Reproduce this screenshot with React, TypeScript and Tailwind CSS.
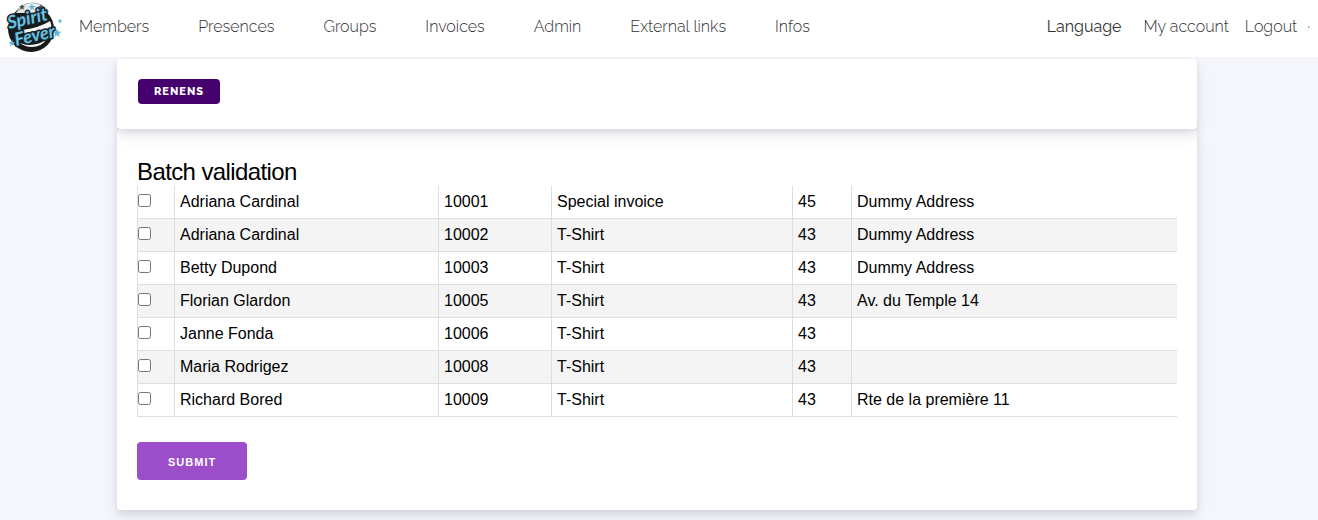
import React from "react";

const menu = ["Members", "Presences", "Groups", "Invoices", "Admin", "External links", "Infos"];

type Invoice = { name: string; number: string; item: string; amount: string; address: string };

const invoices: Invoice[] = [
  { name: "Adriana Cardinal", number: "10001", item: "Special invoice", amount: "45", address: "Dummy Address" },
  { name: "Adriana Cardinal", number: "10002", item: "T-Shirt", amount: "43", address: "Dummy Address" },
  { name: "Betty Dupond", number: "10003", item: "T-Shirt", amount: "43", address: "Dummy Address" },
  { name: "Florian Glardon", number: "10005", item: "T-Shirt", amount: "43", address: "Av. du Temple 14" },
  { name: "Janne Fonda", number: "10006", item: "T-Shirt", amount: "43", address: "" },
  { name: "Maria Rodrigez", number: "10008", item: "T-Shirt", amount: "43", address: "" },
  { name: "Richard Bored", number: "10009", item: "T-Shirt", amount: "43", address: "Rte de la première 11" },
];

const star = "M0 -5L1.4 -1.6L5 -1.4L2.2 .9L3.1 4.4L0 2.4L-3.1 4.4L-2.2 .9L-5 -1.4L-1.4 -1.6Z";

function Logo() {
  return (
    <svg viewBox="0 0 58 52" className="h-[52px] w-[58px] shrink-0" role="img" aria-label="Spirit Fever">
      <path d="M9 13Q16 2 27 2Q38 2 44 11" fill="#f1f3f4" stroke="#a9afb2" strokeWidth="1" />
      <circle cx="26" cy="28" r="23" fill="#17191a" />
      <path d="M11 12Q17 4 27 4Q37 4 42 12L30 12Z" fill="#dfe5e8" />
      <path d="M17 29Q34 27 45 20Q47 24 46 27Q33 29 18 33Z" fill="#f5f6f6" />
      <path d="M15 42Q28 47 41 39Q36 46 27 46Q20 46 15 42Z" fill="#f5f6f6" />
      <g fill="#62b7d9">
        <path d={star} transform="translate(27 6) rotate(-8) scale(.9)" stroke="#fff" strokeWidth=".6" />
        <path d={star} transform="translate(17 6) scale(.6)" fill="#3d4a50" />
        <path d={star} transform="translate(36 6) scale(.6)" fill="#3d4a50" />
        <path d={star} transform="translate(55 20) scale(.5)" />
        <path d={star} transform="translate(52 32) scale(.9)" />
        <path d={star} transform="translate(7 42) scale(.7)" />
      </g>
      <g
        fontFamily="Lato, sans-serif"
        fontStyle="italic"
        fontWeight="700"
        fill="#6ac1e2"
        stroke="#17252b"
        strokeWidth="3"
        paintOrder="stroke"
        strokeLinejoin="round"
      >
        <text x="4" y="28" fontSize="18" transform="rotate(-13 4 28)">Spirit</text>
        <text x="11" y="45" fontSize="18" transform="rotate(-13 11 45)">Fever</text>
      </g>
    </svg>
  );
}

export default function App() {
  return (
    <div className="min-h-screen bg-[#f5f6fb] font-['Liberation_Sans',Arial,sans-serif] text-base text-black">
      <header className="flex h-[57px] items-center bg-white pr-2 pl-[5px] pb-1 font-[Raleway,Lato,sans-serif] text-base font-light text-[#333]">
        <a href="#home"><Logo /></a>
        <nav className="flex flex-1 items-center justify-between pl-4">
          <ul className="flex gap-[49px]">
            {menu.map((label) => (
              <li key={label}><a href="#menu" className="whitespace-nowrap">{label}</a></li>
            ))}
          </ul>
          <ul className="flex">
            <li className="mr-[22px]"><button type="button" className="font-normal">Language</button></li>
            <li className="mr-4"><a href="#account" className="whitespace-nowrap">My account</a></li>
            <li><a href="#logout">Logout</a></li>
            <li className="ml-[10px]">·</li>
          </ul>
        </nav>
      </header>

      <main className="pt-[2px] pr-1 pb-[10px]">
        <div className="mx-auto max-w-[1080px]">
          <section className="relative z-10 flex rounded bg-white px-[21px] pt-5 pb-[25px] shadow-[0_7px_14px_rgba(50,50,93,0.1),0_3px_6px_rgba(0,0,0,0.08)]">
            <button
              type="button"
              className="h-[25px] rounded bg-[#46006e] px-4 pt-[2px] font-[Raleway,'Open_Sans',sans-serif] text-[11px] font-extrabold tracking-[1px] text-white uppercase"
            >
              Renens
            </button>
          </section>

          <form
            className="rounded bg-white px-5 pt-7 pb-[30px] shadow-[0_7px_14px_rgba(50,50,93,0.1),0_3px_6px_rgba(0,0,0,0.08)]"
            onSubmit={(e) => e.preventDefault()}
          >
            <h1 className="text-2xl leading-[29px] tracking-tight">Batch validation</h1>
            <table className="w-full table-fixed border-separate border-spacing-0" aria-label="Batch validation">
              <colgroup>
                <col className="w-[37px]" />
                <col className="w-[264px]" />
                <col className="w-[113px]" />
                <col className="w-[241px]" />
                <col className="w-[59px]" />
                <col />
              </colgroup>
              <tbody>
                {invoices.map((row) => (
                  <tr key={row.number} className="h-[33px] even:bg-[#f4f4f4]">
                    <td className="border-b border-l border-[#dedede] p-0 pb-[3px]">
                      <input
                        type="checkbox"
                        aria-label={`Select ${row.number}`}
                        className="block size-[13px]"
                      />
                    </td>
                    {[row.name, row.number, row.item, row.amount, row.address].map((value, i) => (
                      <td key={i} className="border-b border-l border-[#dedede] px-[5px] py-0">{value}</td>
                    ))}
                  </tr>
                ))}
              </tbody>
            </table>
            <button
              type="submit"
              className="mt-[25px] block h-[38px] rounded bg-[#9b4dca] px-[31px] pt-[2px] text-[11px] font-bold tracking-[1px] text-white uppercase"
            >
              Submit
            </button>
          </form>
        </div>
      </main>
    </div>
  );
}
